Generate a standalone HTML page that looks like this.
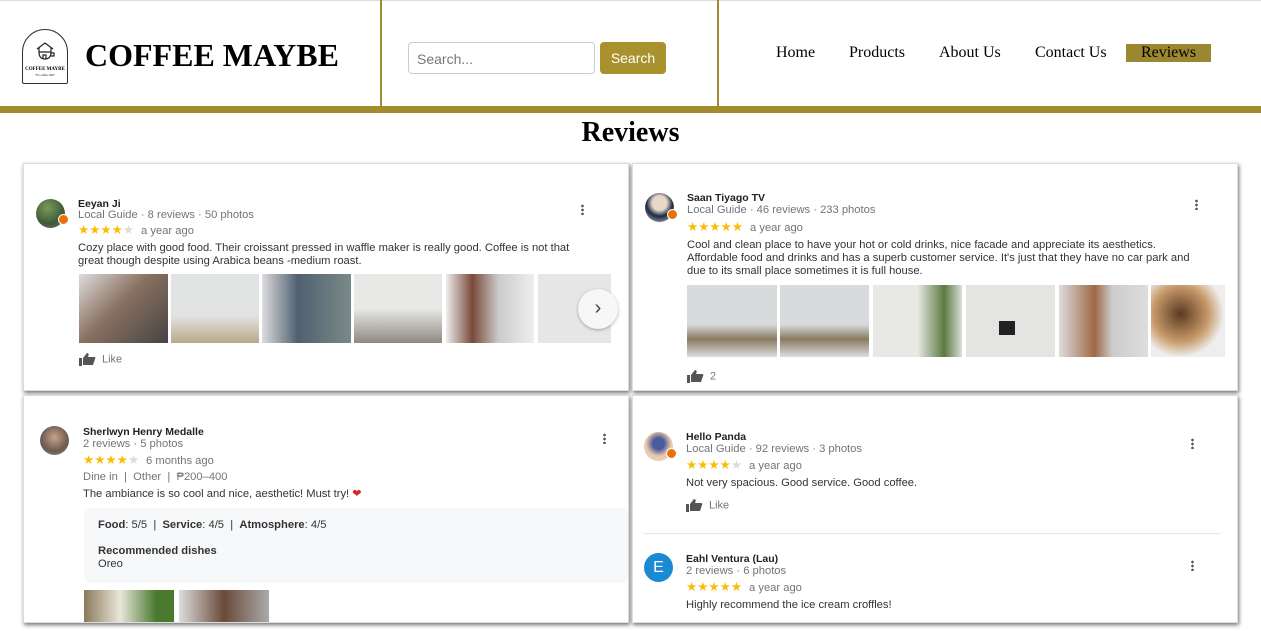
<!DOCTYPE html>
<html><head><meta charset="utf-8"><style>
*{margin:0;padding:0;box-sizing:border-box}
body{width:1261px;height:631px;overflow:hidden;background:#fff;position:relative;font-family:"Liberation Sans",Arial,sans-serif}
.a{position:absolute}
.serif{font-family:"Liberation Serif","Times New Roman",serif}
.card{position:absolute;background:#fff;box-shadow:1px 2px 4px rgba(0,0,0,.55);border:1px solid #ddd;overflow:hidden}
.nm{position:absolute;font-size:10.5px;font-weight:bold;color:#222;white-space:nowrap}
.mt{position:absolute;font-size:11.2px;color:#70757a;white-space:nowrap}
.st{position:absolute;font-size:12.5px;line-height:13px;color:#fbbc04;white-space:nowrap}
.st i{font-style:normal;color:#dadce0}
.st span{color:#70757a;font-size:11.2px;margin-left:7px}
.tx{position:absolute;font-size:11.2px;color:#333;line-height:13px;white-space:nowrap}
.av{position:absolute;border-radius:50%}
.dots{position:absolute;width:3px;height:11px;background:radial-gradient(circle,#555 1.2px,transparent 1.5px) 0 0/3px 4px repeat-y}
.ph{position:absolute}
.like{position:absolute;font-size:11px;color:#70757a;white-space:nowrap}
.thumb{display:inline-block;width:17px;height:13px;vertical-align:middle;margin-right:6px}
</style></head><body>
<div class="a" style="left:0;top:0;width:1261px;height:1px;background:#ddd"></div>
<div class="a" style="left:380px;top:0;width:2px;height:107px;background:#a08a30"></div>
<div class="a" style="left:717px;top:0;width:2px;height:107px;background:#a08a30"></div>
<div class="a" style="left:0;top:106px;width:1261px;height:7px;background:#a28b30"></div>
<div class="a" style="left:22px;top:29px;width:46px;height:55px;border:1px solid #333;border-radius:23px 23px 2px 2px"></div>
<svg class="a" style="left:33px;top:40px" width="24" height="22" viewBox="0 0 24 22"><path d="M4 9 L12 3 L20 9 M6 8 V12 H18 V8 M6 12 Q6 19 12 19 Q18 19 18 12 M18 13 H21 V16 H18 M10 19 V15 H13 V19" fill="none" stroke="#222" stroke-width="1.2"/></svg>
<div class="a serif" style="left:24px;top:67px;width:42px;text-align:center;font-size:5px;font-weight:bold">COFFEE MAYBE</div>
<div class="a serif" style="left:24px;top:73px;width:42px;text-align:center;font-size:3px">"It's coffee chill"</div>
<div class="a serif" style="left:85px;top:37px;font-size:32px;font-weight:bold;white-space:nowrap">COFFEE MAYBE</div>
<div class="a" style="left:408px;top:42px;width:187px;height:32px;border:1px solid #ccc;border-radius:4px;font-size:14px;color:#777;padding:8px 8px">Search...</div>
<div class="a" style="left:600px;top:42px;width:66px;height:32px;background:#a9922e;border-radius:4px;color:#fff;font-size:14px;text-align:center;line-height:32px">Search</div>
<div class="a serif" style="left:776px;top:44px;font-size:16px">Home</div>
<div class="a serif" style="left:849px;top:44px;font-size:16px">Products</div>
<div class="a serif" style="left:939px;top:44px;font-size:16px">About Us</div>
<div class="a serif" style="left:1035px;top:44px;font-size:16px">Contact Us</div>
<div class="a serif" style="left:1126px;top:44px;width:85px;height:18px;background:#9b872f;font-size:16px;text-align:center;line-height:18px">Reviews</div>
<div class="a serif" style="left:0;top:117px;width:1261px;text-align:center;font-size:28px;font-weight:bold">Reviews</div>

<div class="card" style="left:23px;top:163px;width:606px;height:228px">
<div class="av" style="left:12px;top:35px;width:29px;height:29px;background:radial-gradient(circle at 40% 30%,#7a9a5a,#3d5a38 60%,#777)"></div>
<div class="av" style="left:34px;top:50px;width:11px;height:11px;background:#e8710a;border:1px solid #fff"></div>
<div class="nm" style="left:54px;top:34px">Eeyan Ji</div>
<div class="mt" style="left:54px;top:45px">Local Guide · 8 reviews · 50 photos</div>
<div class="st" style="left:54px;top:60px">★★★★<i>★</i><span>a year ago</span></div>
<div class="tx" style="left:54px;top:78px">Cozy place with good food. Their croissant pressed in waffle maker is really good. Coffee is not that<br>great though despite using Arabica beans -medium roast.</div>
<div class="dots" style="left:557px;top:40px"></div>
<div class="ph" style="left:55px;top:110px;width:89px;height:69px;background:linear-gradient(135deg,#ddd,#8a7060 45%,#444)"></div>
<div class="ph" style="left:147px;top:110px;width:88px;height:69px;background:linear-gradient(#e2e4e4 60%,#b9a88a)"></div>
<div class="ph" style="left:238px;top:110px;width:89px;height:69px;background:linear-gradient(90deg,#ddd,#506070 40%,#7a8a88)"></div>
<div class="ph" style="left:330px;top:110px;width:88px;height:69px;background:linear-gradient(#e8e8e6 50%,#8f8a80)"></div>
<div class="ph" style="left:422px;top:110px;width:88px;height:69px;background:linear-gradient(90deg,#eee,#7a4a3a 30%,#ccc 60%,#eee)"></div>
<div class="ph" style="left:514px;top:110px;width:73px;height:69px;background:#e6e6e6"></div>
<div class="av" style="left:554px;top:125px;width:40px;height:40px;background:#f7f7f7;box-shadow:0 1px 3px rgba(0,0,0,.3);font-size:20px;text-align:center;line-height:38px;color:#444">›</div>
<div class="like" style="left:55px;top:189px"><svg class="thumb" viewBox="0 0 17 13"><path d="M0 5h3v8H0zM4 5l4-5c2 0 2 2 1 4h6c1 0 2 1 1 2l-2 6H4z" fill="#555"/></svg>Like</div>
</div>

<div class="card" style="left:632px;top:163px;width:606px;height:228px">
<div class="av" style="left:12px;top:29px;width:29px;height:29px;background:radial-gradient(circle at 50% 35%,#e8d8c8 30%,#1c2a44 55%,#ccc)"></div>
<div class="av" style="left:34px;top:45px;width:11px;height:11px;background:#e8710a;border:1px solid #fff"></div>
<div class="nm" style="left:54px;top:28px">Saan Tiyago TV</div>
<div class="mt" style="left:54px;top:40px">Local Guide · 46 reviews · 233 photos</div>
<div class="st" style="left:54px;top:57px">★★★★★<span>a year ago</span></div>
<div class="tx" style="left:54px;top:75px">Cool and clean place to have your hot or cold drinks, nice facade and appreciate its aesthetics.<br>Affordable food and drinks and has a superb customer service. It's just that they have no car park and<br>due to its small place sometimes it is full house.</div>
<div class="dots" style="left:562px;top:35px"></div>
<div class="ph" style="left:54px;top:121px;width:90px;height:72px;background:linear-gradient(#d8dadc 55%,#8a7a60 75%,#ddd)"></div>
<div class="ph" style="left:147px;top:121px;width:89px;height:72px;background:linear-gradient(#d8dadc 55%,#8a7a60 75%,#ddd)"></div>
<div class="ph" style="left:240px;top:121px;width:89px;height:72px;background:linear-gradient(90deg,#e8e8e4 50%,#5a7a40 80%,#ddd)"></div>
<div class="ph" style="left:333px;top:121px;width:89px;height:72px;background:#e4e4e2"></div>
<div class="ph" style="left:366px;top:157px;width:16px;height:14px;background:#222"></div>
<div class="ph" style="left:426px;top:121px;width:89px;height:72px;background:linear-gradient(90deg,#ddd,#a06848 40%,#ccc 60%,#ddd)"></div>
<div class="ph" style="left:518px;top:121px;width:74px;height:72px;background:radial-gradient(circle at 40% 40%,#5a3a22,#c89a6a 45%,#eee 70%)"></div>
<div class="like" style="left:54px;top:206px"><svg class="thumb" viewBox="0 0 17 13"><path d="M0 5h3v8H0zM4 5l4-5c2 0 2 2 1 4h6c1 0 2 1 1 2l-2 6H4z" fill="#555"/></svg>2</div>
</div>

<div class="card" style="left:23px;top:395px;width:606px;height:228px">
<div class="av" style="left:16px;top:30px;width:29px;height:29px;background:radial-gradient(circle at 50% 40%,#caa48a,#6a5a50 60%,#999)"></div>
<div class="nm" style="left:59px;top:30px">Sherlwyn Henry Medalle</div>
<div class="mt" style="left:59px;top:42px">2 reviews · 5 photos</div>
<div class="st" style="left:59px;top:58px">★★★★<i>★</i><span>6 months ago</span></div>
<div class="mt" style="left:59px;top:75px">Dine in &nbsp;| &nbsp;Other &nbsp;| &nbsp;₱200–400</div>
<div class="tx" style="left:59px;top:92px">The ambiance is so cool and nice, aesthetic! Must try! <span style="color:#d22">❤</span></div>
<div class="dots" style="left:579px;top:37px"></div>
<div class="a" style="left:60px;top:112px;width:545px;height:75px;background:#f7f8fa;border-radius:6px"></div>
<div class="tx" style="left:74px;top:123px"><b>Food</b>: 5/5 &nbsp;| &nbsp;<b>Service</b>: 4/5 &nbsp;| &nbsp;<b>Atmosphere</b>: 4/5</div>
<div class="tx" style="left:74px;top:149px"><b>Recommended dishes</b><br>Oreo</div>
<div class="ph" style="left:60px;top:194px;width:90px;height:34px;background:linear-gradient(90deg,#8a7a5a,#eae6da 40%,#4a7a30 80%)"></div>
<div class="ph" style="left:155px;top:194px;width:90px;height:34px;background:linear-gradient(90deg,#ddd,#6a4a3a 50%,#aaa)"></div>
</div>

<div class="card" style="left:632px;top:395px;width:606px;height:228px">
<div class="av" style="left:11px;top:36px;width:29px;height:29px;background:radial-gradient(circle at 50% 40%,#4a5a9a 25%,#e8c8a8 55%,#ddd)"></div>
<div class="av" style="left:33px;top:52px;width:11px;height:11px;background:#e8710a;border:1px solid #fff"></div>
<div class="nm" style="left:53px;top:35px">Hello Panda</div>
<div class="mt" style="left:53px;top:47px">Local Guide · 92 reviews · 3 photos</div>
<div class="st" style="left:53px;top:63px">★★★★<i>★</i><span>a year ago</span></div>
<div class="tx" style="left:53px;top:81px">Not very spacious. Good service. Good coffee.</div>
<div class="like" style="left:53px;top:103px"><svg class="thumb" viewBox="0 0 17 13"><path d="M0 5h3v8H0zM4 5l4-5c2 0 2 2 1 4h6c1 0 2 1 1 2l-2 6H4z" fill="#555"/></svg>Like</div>
<div class="dots" style="left:558px;top:42px"></div>
<div class="a" style="left:10px;top:137px;width:578px;height:1px;background:#e8e8e8"></div>
<div class="av" style="left:11px;top:157px;width:29px;height:29px;background:#1a8ad4;color:#fff;font-size:16px;text-align:center;line-height:29px">E</div>
<div class="nm" style="left:53px;top:157px">Eahl Ventura (Lau)</div>
<div class="mt" style="left:53px;top:169px">2 reviews · 6 photos</div>
<div class="st" style="left:53px;top:185px">★★★★★<span>a year ago</span></div>
<div class="tx" style="left:53px;top:203px">Highly recommend the ice cream croffles!</div>
<div class="dots" style="left:558px;top:164px"></div>
</div>
</body></html>
